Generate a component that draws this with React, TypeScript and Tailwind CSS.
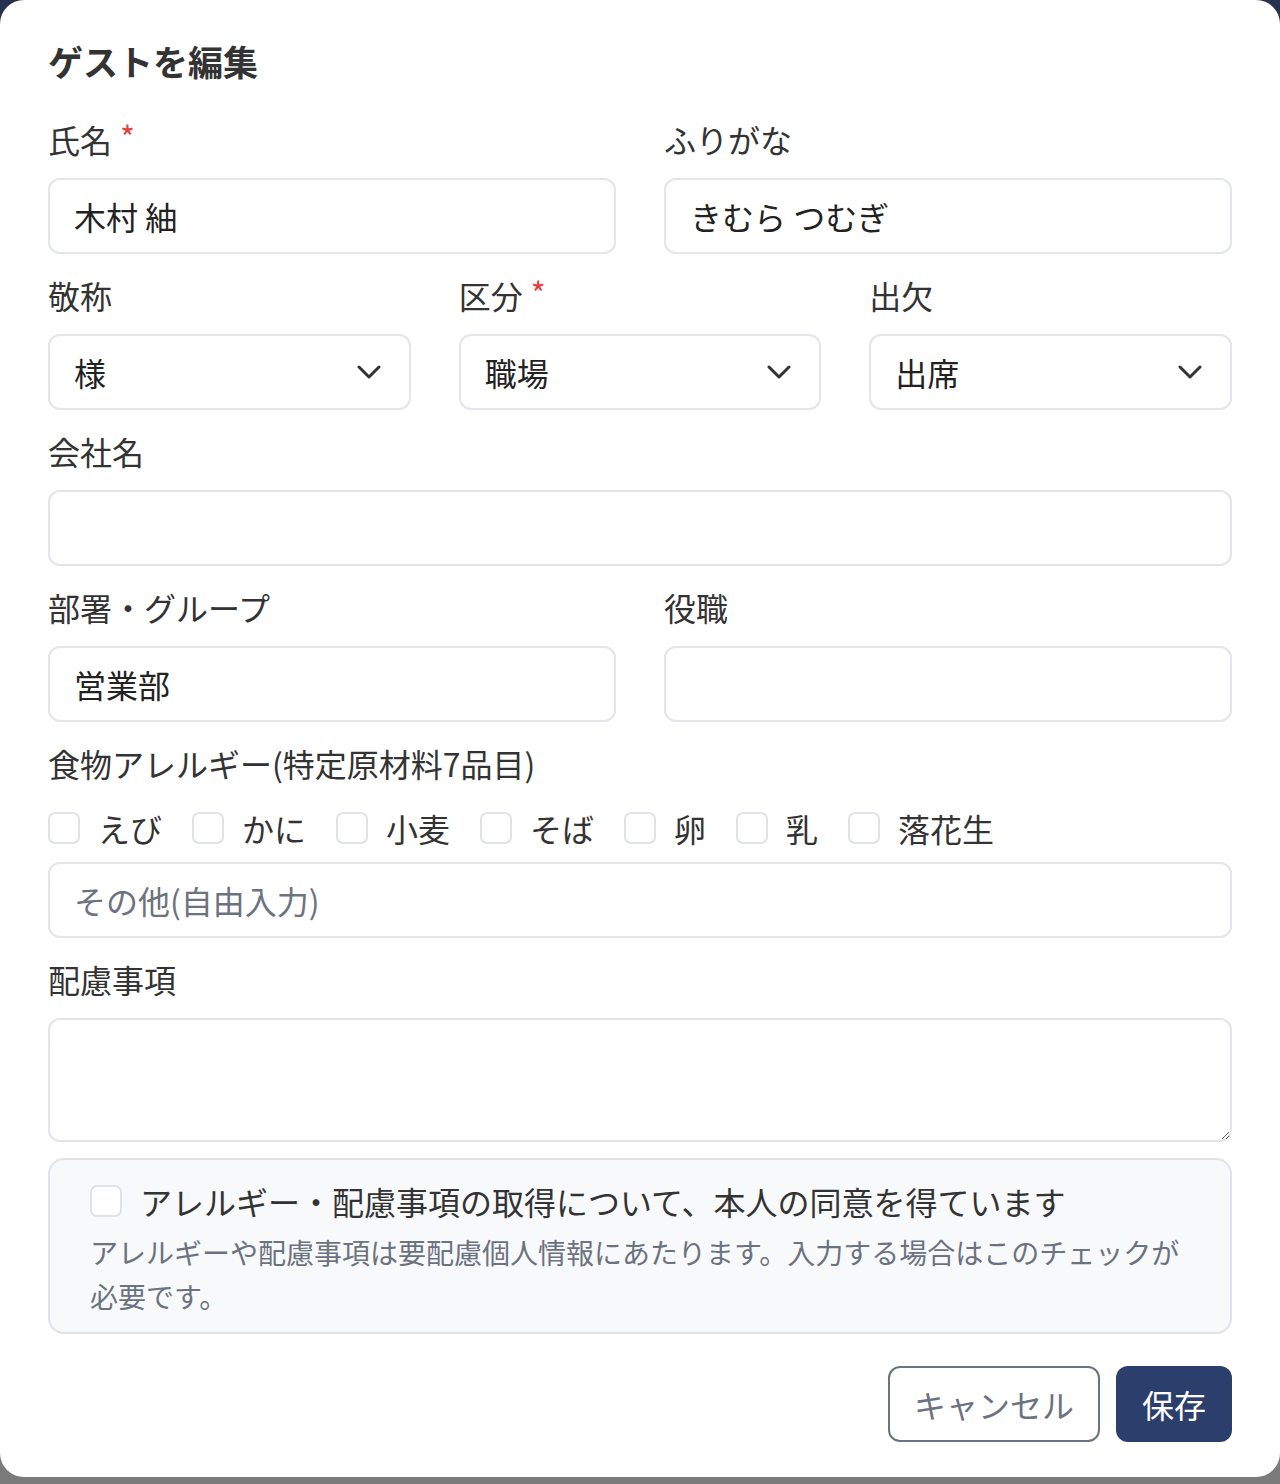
import React from "react";

const labelCls = "block h-[48px] leading-[46px] text-[32px] text-[#333333] mb-[14px]";
const inputCls =
  "block w-full h-[76px] rounded-[12px] border-2 border-[#e2e5e9] bg-white px-[24px] text-[32px] text-[#222222] outline-none placeholder:text-[#6b7280]";

function Label({ text, required }: { text: string; required?: boolean }) {
  return (
    <div className={labelCls}>
      {text}
      {required && <span className="ml-[8px] align-top text-[32px] leading-[40px] text-[#e53e3e]">*</span>}
    </div>
  );
}

function Chevron() {
  return (
    <svg
      className="pointer-events-none absolute right-[30px] top-1/2 -translate-y-1/2"
      width="24"
      height="14"
      viewBox="0 0 24 14"
      fill="none"
    >
      <polyline points="2,2 12,12 22,2" stroke="#333333" strokeWidth="3" strokeLinecap="round" strokeLinejoin="round" />
    </svg>
  );
}

function Select({ value, options }: { value: string; options: string[] }) {
  return (
    <div className="relative">
      <select
        defaultValue={value}
        className="block w-full h-[76px] appearance-none rounded-[12px] border-2 border-[#e2e5e9] bg-white px-[24px] text-[32px] text-[#222222] outline-none"
      >
        {options.map((o) => (
          <option key={o} value={o}>
            {o}
          </option>
        ))}
      </select>
      <Chevron />
    </div>
  );
}

function Check({ label }: { label: string }) {
  return (
    <label className="flex items-center gap-[18px] mr-[30px]">
      <input
        type="checkbox"
        className="h-[32px] w-[32px] appearance-none rounded-[7px] border-2 border-[#dfe2e6] bg-white"
      />
      <span className="text-[32px] text-[#333333]">{label}</span>
    </label>
  );
}

export default function App() {
  const allergies = ["えび", "かに", "小麦", "そば", "卵", "乳", "落花生"];
  return (
    <div className="relative w-[1280px] h-[1484px] overflow-hidden font-['Noto_Sans_CJK_JP','Noto_Sans',sans-serif]">
      <div className="flex h-full flex-col">
        <div className="h-[48px] bg-[#25314f]" />
        <div className="flex-1 bg-[#7b7b7b]" />
      </div>
      <div className="absolute left-0 top-0 h-[1477px] w-[1280px] rounded-[24px] bg-white px-[48px] pt-[39px] pb-[36px]">
        <h2 className="h-[44px] leading-[44px] text-[35px] font-bold text-[#333333] mb-[33px]">ゲストを編集</h2>

        <div className="flex flex-col gap-[18px]">
          <div className="grid grid-cols-2 gap-x-[48px]">
            <div>
              <Label text="氏名" required />
              <input className={inputCls} defaultValue="木村 紬" />
            </div>
            <div>
              <Label text="ふりがな" />
              <input className={inputCls} defaultValue="きむら つむぎ" />
            </div>
          </div>

          <div className="grid grid-cols-3 gap-x-[48px]">
            <div>
              <Label text="敬称" />
              <Select value="様" options={["様", "さん", "くん", "ちゃん"]} />
            </div>
            <div>
              <Label text="区分" required />
              <Select value="職場" options={["職場", "友人", "親族"]} />
            </div>
            <div>
              <Label text="出欠" />
              <Select value="出席" options={["出席", "欠席", "未定"]} />
            </div>
          </div>

          <div>
            <Label text="会社名" />
            <input className={inputCls} />
          </div>

          <div className="grid grid-cols-2 gap-x-[48px]">
            <div>
              <Label text="部署・グループ" />
              <input className={inputCls} defaultValue="営業部" />
            </div>
            <div>
              <Label text="役職" />
              <input className={inputCls} />
            </div>
          </div>

          <div>
            <Label text="食物アレルギー(特定原材料7品目)" />
            <div className="flex h-[52px] items-center">
              {allergies.map((a) => (
                <Check key={a} label={a} />
              ))}
            </div>
            <input className={inputCls + " mt-[8px]"} placeholder="その他(自由入力)" />
          </div>

          <div>
            <Label text="配慮事項" />
            <textarea className="block h-[124px] w-full resize-y rounded-[12px] border-2 border-[#e2e5e9] bg-white px-[24px] py-[16px] text-[32px] text-[#222222] outline-none" />
          </div>
        </div>

        <div className="mt-[16px] h-[176px] rounded-[16px] border-2 border-[#dfe2e8] bg-[#f8f9fb] px-[40px] pt-[17px]">
          <label className="flex h-[48px] items-center gap-[18px]">
            <input
              type="checkbox"
              className="h-[32px] w-[32px] appearance-none rounded-[7px] border-2 border-[#dfe2e6] bg-white"
            />
            <span className="text-[32px] text-[#333333]">アレルギー・配慮事項の取得について、本人の同意を得ています</span>
          </label>
          <p className="mt-[5px] text-[28px] leading-[44px] text-[#6b7280]">
            アレルギーや配慮事項は要配慮個人情報にあたります。入力する場合はこのチェックが必要です。
          </p>
        </div>

        <div className="mt-[32px] flex justify-end gap-[16px]">
          <button className="h-[76px] w-[212px] rounded-[12px] border-2 border-[#6b7280] bg-white text-[32px] text-[#6b7280]">
            キャンセル
          </button>
          <button className="h-[76px] w-[116px] rounded-[12px] bg-[#2c3e6b] text-[32px] text-white">保存</button>
        </div>
      </div>
    </div>
  );
}
